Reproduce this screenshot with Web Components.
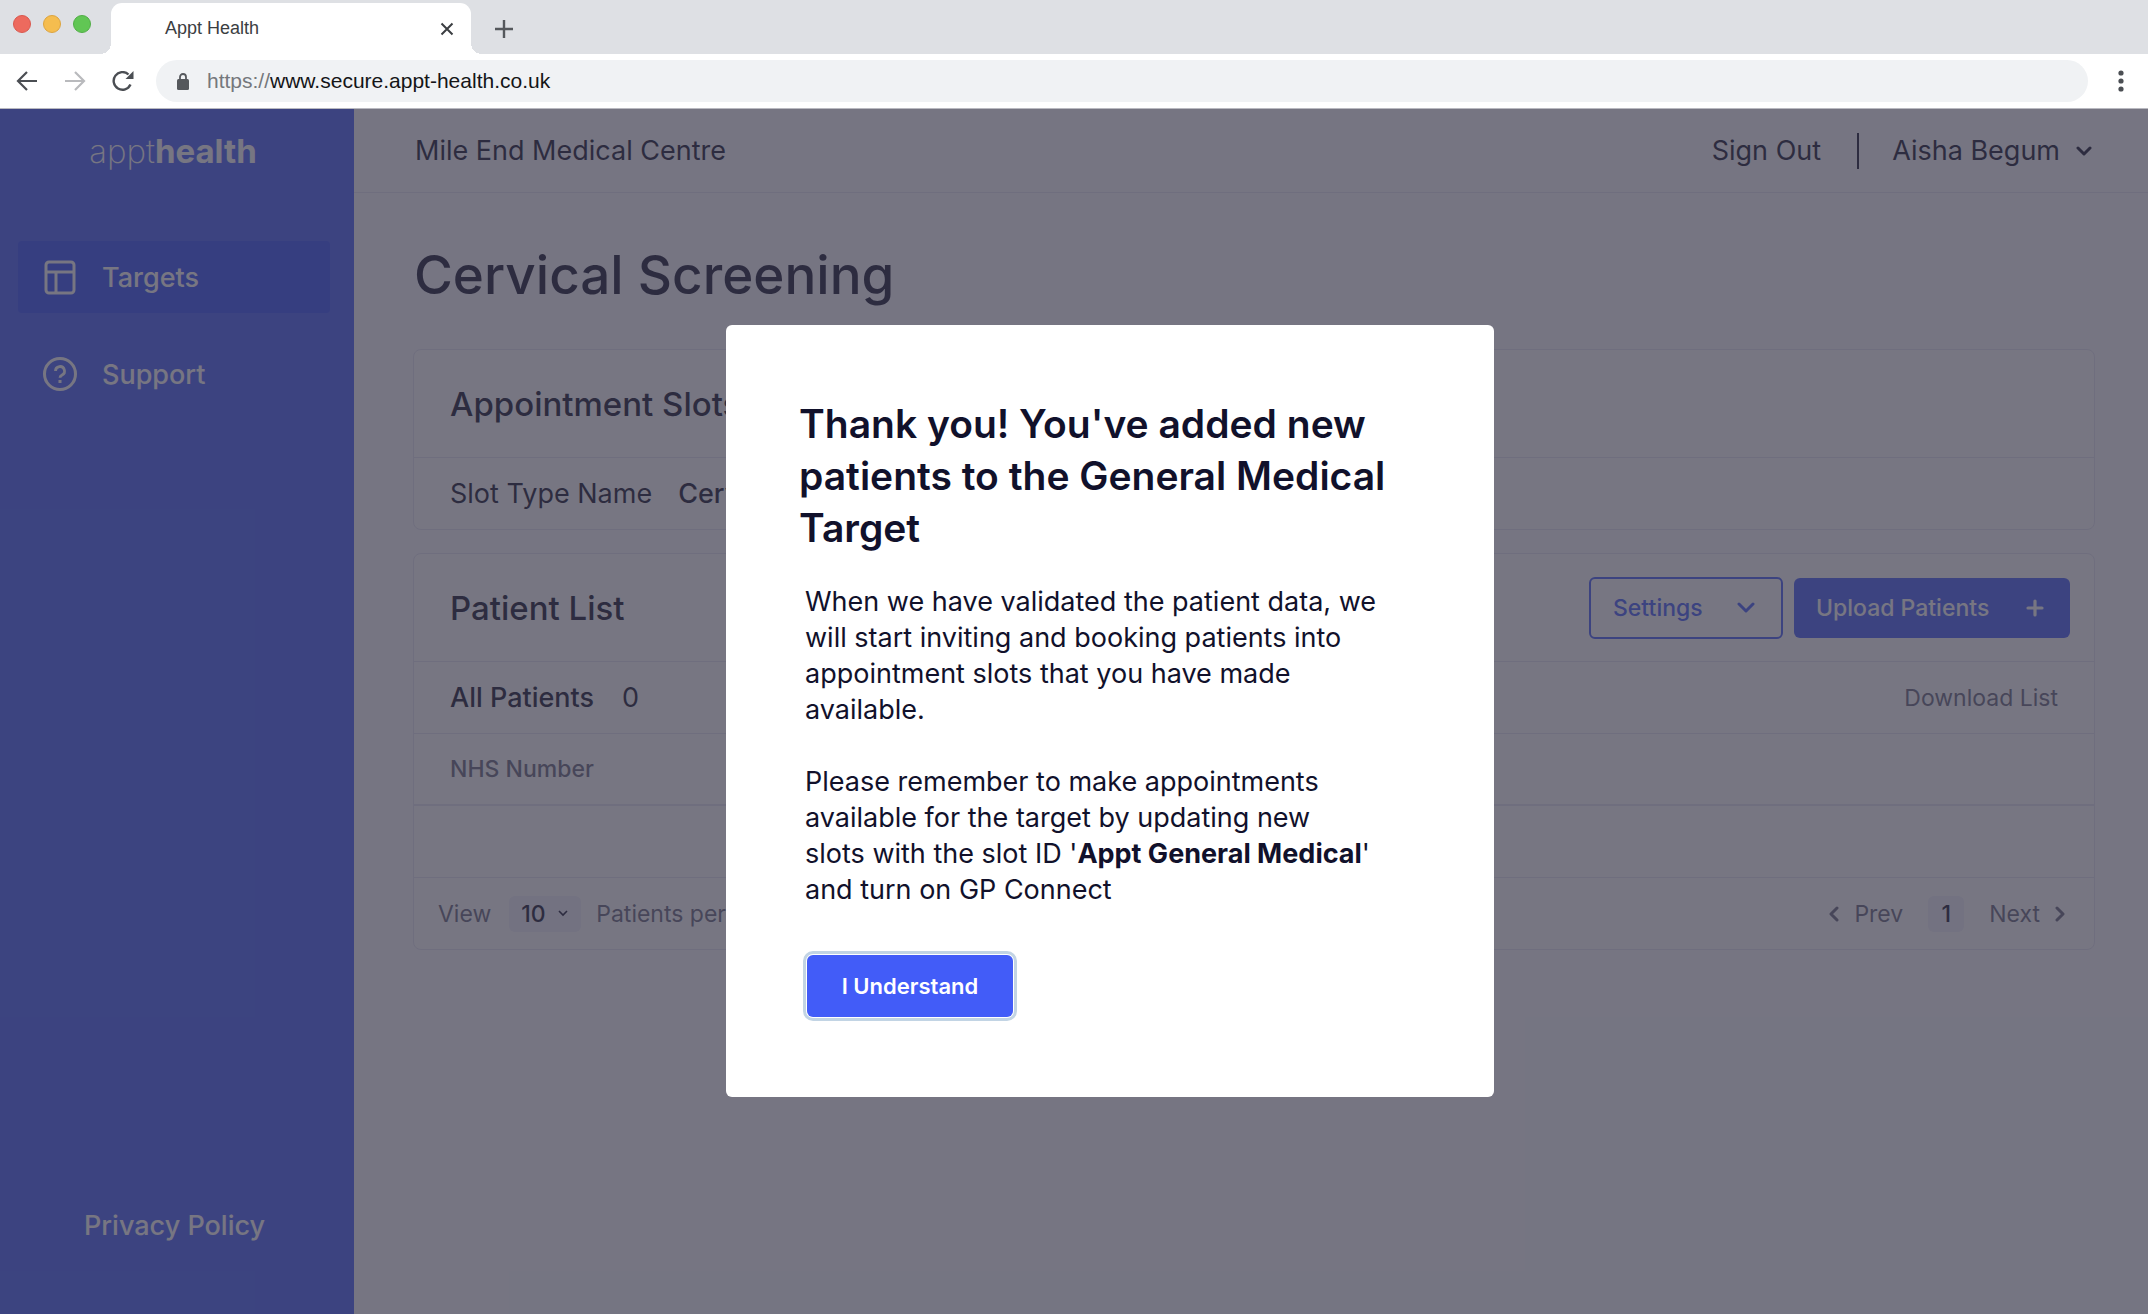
<!DOCTYPE html>
<html lang="en">
<head>
<meta charset="utf-8">
<title>Appt Health</title>
<style>
html, body { margin: 0; height: 100%; }
body {
  font-family: Inter, "Open Sans", sans-serif;
  --ink: #11112b;
  --muted: #66667c;
  --line: #e6e6f2;
  --brand: #425cf8;
  --t-s: 23px;
  --t-m: 27px;
  --t-l: 33px;
  color: var(--ink);
}
</style>
</head>
<body>
<browser-window>
  <app-shell>
    <side-nav slot="nav"></side-nav>
    <top-bar practice="Mile End Medical Centre" user="Aisha Begum"></top-bar>
    <page-content heading="Cervical Screening">
      <info-card heading="Appointment Slots">
        <slot-type-row label="Slot Type Name">Cervical</slot-type-row>
      </info-card>
      <info-card heading="Patient List">
        <list-actions slot="actions"></list-actions>
        <patient-table></patient-table>
      </info-card>
    </page-content>
    <confirm-modal slot="overlay">
      <span slot="title">Thank you! You've added new<br>patients to the General Medical<br>Target</span>
      <span slot="body">When we have validated the patient data, we<br>will start inviting and booking patients into<br>appointment slots that you have made<br>available.</span>
      <span slot="note">Please remember to make appointments<br>available for the target by updating new<br>slots with the slot ID '<b>Appt General Medical</b>'<br>and turn on GP Connect</span>
      <span slot="action">I Understand</span>
    </confirm-modal>
  </app-shell>
</browser-window>

<script>
const define = (name, render) => customElements.define(name, class extends HTMLElement {
  constructor() {
    super();
    this.attachShadow({ mode: 'open' });
  }
  connectedCallback() {
    this.shadowRoot.innerHTML = '<style>*{box-sizing:border-box}svg{display:block;flex:none;fill:none;stroke:currentColor}button,select{font:inherit;color:inherit;background:none;border:0;margin:0;padding:0}a{color:inherit;text-decoration:none}</style>' + render(this);
  }
});

define('browser-window', () => `
<style>
:host { display: flex; flex-direction: column; min-height: 100vh; font-family: "Liberation Sans", Arial, sans-serif; }
.tabs { display: flex; height: 54px; background: #dee0e4; padding-top: 3px; }
.lights { display: flex; gap: 12px; padding: 12px 20px 0 13px; }
.lights i { width: 18px; height: 18px; border-radius: 50%; border: 1px solid; }
.tab { position: relative; display: flex; align-items: center; justify-content: space-between; width: 360px; padding: 0 17px 0 54px; background: #fff; border-radius: 11px 11px 0 0; font-size: 18px; color: #3b3e42; }
.tab::before, .tab::after { content: ""; position: absolute; bottom: 0; width: 11px; height: 11px; }
.tab::before { right: 100%; background: radial-gradient(circle at 0 0, transparent 11px, #fff 11px); }
.tab::after { left: 100%; background: radial-gradient(circle at 100% 0, transparent 11px, #fff 11px); }
.plus { margin: 0 0 0 24px; color: #55585c; }
.bar { display: flex; align-items: center; height: 55px; padding: 0 20px 0 16px; background: #fff; border-bottom: 1px solid #b9b9c0; color: #4b4e53; }
.nav { display: flex; gap: 26px; width: 140px; }
.url { display: flex; align-items: center; gap: 18px; flex: 1; height: 42px; padding-left: 21px; background: #f0f2f4; border-radius: 21px; font-size: 21px; color: #75787c; margin-right: 28px; }
.url b { font-weight: normal; color: #141517; }
.page { display: flex; flex: 1; font-family: Inter, "Open Sans", sans-serif; }
::slotted(*) { flex: 1; }
</style>
<div class="tabs">
  <div class="lights"><i style="background:#ed6a5e;border-color:#d9584e"></i><i style="background:#f5bd4f;border-color:#dca43f"></i><i style="background:#61c654;border-color:#51ae46"></i></div>
  <div class="tab"><span>Appt Health</span>
    <button aria-label="Close tab"><svg width="14" height="14" stroke-width="2"><path d="M1.500 1.500l11 11M12.500 1.500l-11 11"/></svg></button></div>
  <button class="plus" aria-label="New tab"><svg width="18" height="18" stroke-width="2.400"><path d="M9 0v18M0 9h18"/></svg></button>
</div>
<div class="bar">
  <div class="nav">
    <button aria-label="Back"><svg width="22" height="20" stroke-width="2.200"><path d="M21 10H3M11 1L2 10l9 9"/></svg></button>
    <button aria-label="Forward" style="color:#b9babd"><svg width="22" height="20" stroke-width="2.200"><path d="M1 10h18M11 1l9 9-9 9"/></svg></button>
    <button aria-label="Reload"><svg width="22" height="20" stroke-width="2.400"><path d="M18.500 13.500A8.800 8.800 0 1 1 16.500 3.500"/><path d="M21.500 0v8h-8z" fill="currentColor" stroke="none"/></svg></button>
  </div>
  <div class="url"><svg width="12" height="17"><rect y="6" width="12" height="11" rx="1.500" fill="#55585c" stroke="none"/><path d="M3 7V4a3 3 0 0 1 6 0v3" stroke="#55585c" stroke-width="1.800"/></svg><span>https://<b>www.secure.appt-health.co.uk</b></span></div>
  <button aria-label="Menu"><svg width="12" height="24"><g fill="currentColor" stroke="none"><circle cx="5" cy="4" r="2.600"/><circle cx="5" cy="12" r="2.600"/><circle cx="5" cy="20" r="2.600"/></g></svg></button>
</div>
<div class="page"><slot></slot></div>`);

define('app-shell', () => `
<style>
:host { position: relative; display: flex; background: #fafafe; }
main { flex: 1; min-width: 0; }
</style>
<slot name="nav"></slot><main><slot></slot></main><slot name="overlay"></slot>`);

define('side-nav', () => `
<style>
:host { display: flex; flex-direction: column; width: 354px; flex: none; background: var(--brand); color: #fff; }
.logo { height: 84px; padding: 2px 8px 0 0; text-align: center; font-size: 33px; font-weight: 200; line-height: 80px; }
.logo b { font-weight: 700; }
nav { display: flex; flex-direction: column; gap: 25px; padding: 48px 24px 0 18px; flex: 1; }
.policy { padding: 0 84px; font-size: var(--t-m); font-weight: 500; line-height: 36px; margin-bottom: 70px; white-space: nowrap; }
</style>
<div class="logo">appt<b>health</b></div>
<nav>
  <nav-item current label="Targets"><svg width="36" height="36" fill="none" stroke="currentColor" stroke-width="3"><rect x="4" y="3" width="28" height="31" rx="3"/><path d="M4 13h28M14 13v21"/></svg></nav-item>
  <nav-item label="Support"><svg width="36" height="36" fill="none" stroke="currentColor" stroke-width="3"><circle cx="18" cy="18" r="15.500"/><path stroke-width="2.800" d="M13.500 15a4.500 4.500 0 1 1 6.600 4c-1.500.8-2.100 1.300-2.100 2.800"/><path d="M18 24v3"/></svg></nav-item>
</nav>
<a class="policy" href="#privacy">Privacy Policy</a>`);

define('nav-item', el => `
<style>
:host { display: block; }
a { display: flex; align-items: center; gap: 24px; height: 72px; padding-left: 24px; border-radius: 4px; font-size: var(--t-m); font-weight: 500; }
:host([current]) a { background: #2d4af8; }
</style>
<a href="#${el.getAttribute('label').toLowerCase()}"><slot></slot>${el.getAttribute('label')}</a>`);

define('top-bar', el => `
<style>
:host { box-sizing: border-box; display: flex; align-items: center; height: 84px; padding: 0 56px 0 61px; border-bottom: 1px solid var(--line); font-size: var(--t-m); }
.who { display: flex; align-items: center; margin-left: auto; }
.rule { width: 2px; height: 36px; margin: 0 33px 0 36px; background: var(--ink); }
button { display: flex; align-items: center; gap: 16px; }
</style>
<span>${el.getAttribute('practice')}</span>
<div class="who"><a href="#sign-out">Sign Out</a><span class="rule"></span>
<button>${el.getAttribute('user')}<svg width="16" height="10" stroke-width="3" stroke-linecap="round" stroke-linejoin="round"><path d="M2 2l6 6 6-6"/></svg></button></div>`);

define('page-content', el => `
<style>
:host { display: flex; flex-direction: column; gap: 23px; padding: 46px 53px 0 59px; }
h1 { margin: 0 0 15px 1px; font-size: 53px; font-weight: 500; line-height: 72px; }
</style>
<h1>${el.getAttribute('heading')}</h1><slot></slot>`);

define('info-card', el => `
<style>
:host { display: block; background: #fff; border: 1px solid var(--line); border-radius: 8px; }
header { display: flex; align-items: center; justify-content: space-between; height: 108px; padding: 0 24px 0 36px; border-bottom: 1px solid var(--line); }
h2 { margin: 0; font-size: var(--t-l); font-weight: 500; }
</style>
<header><h2>${el.getAttribute('heading')}</h2><slot name="actions"></slot></header><slot></slot>`);

define('slot-type-row', el => `
<style>
:host { display: flex; align-items: center; gap: 26px; height: 71px; padding: 0 36px; font-size: var(--t-m); }
b { font-weight: 500; }
</style>
<span>${el.getAttribute('label')}</span><b><slot></slot></b>`);

define('list-actions', () => `
<style>
:host { display: flex; align-items: center; gap: 11px; font-size: var(--t-s); font-weight: 500; }
button { display: flex; align-items: center; justify-content: space-between; border-radius: 6px; }
.line { width: 194px; height: 62px; padding: 0 26px 0 22px; border: 2px solid var(--brand); color: var(--brand); }
.fill { width: 276px; height: 60px; padding: 0 26px 0 22px; background: var(--brand); color: #fff; }
</style>
<button class="line">Settings<svg width="18" height="12" stroke-width="3" stroke-linecap="round" stroke-linejoin="round"><path d="M2 2l7 7 7-7"/></svg></button>
<button class="fill">Upload Patients<svg width="18" height="18" stroke-width="3.200" stroke-linecap="round"><path d="M9 2v14M2 9h14"/></svg></button>`);

define('patient-table', () => `
<style>
:host { display: block; font-size: var(--t-s); color: var(--muted); }
.row { display: flex; align-items: center; height: 72px; padding: 0 36px; }
.all { border-bottom: 1px solid var(--line); color: var(--ink); font-size: var(--t-m); gap: 28px; }
.all b { font-weight: 500; }
.all a { margin-left: auto; font-size: var(--t-s); color: var(--muted); }
table { width: 100%; border-spacing: 0; }
th, td { height: 72px; padding: 0 36px; text-align: left; font-weight: 500; border-bottom: 1px solid var(--line); }
th { border-bottom-width: 2px; }
.foot { padding: 0 29px 0 24px; height: 71px; }
.size { position: relative; display: flex; align-items: center; margin: 0 15px 0 18px; color: var(--ink); font-weight: 500; }
select { appearance: none; width: 72px; height: 36px; padding-left: 12px; background: #f0f0fa; border-radius: 6px; }
.size svg { position: absolute; right: 13px; pointer-events: none; }
.pages { display: flex; align-items: center; margin-left: auto; }
.pages button { display: flex; align-items: center; gap: 15px; }
.num { width: 36px; height: 36px; margin: 0 25px; line-height: 36px; text-align: center; background: #f0f0fa; border-radius: 6px; color: var(--ink); font-weight: 500; }
</style>
<div class="row all"><b>All Patients</b><span>0</span><a href="#download">Download List</a></div>
<table><thead><tr><th>NHS Number</th></tr></thead><tbody><tr><td></td></tr></tbody></table>
<div class="row foot"><label for="size">View</label>
<span class="size"><select id="size"><option>10</option></select><svg width="10" height="7" stroke-width="1.600"><path d="M1 1l4 4 4-4"/></svg></span>
<span>Patients per page</span>
<div class="pages">
<button><svg width="10" height="16" stroke-width="3" stroke-linecap="round" stroke-linejoin="round"><path d="M8 2L2 8l6 6"/></svg>Prev</button>
<span class="num">1</span>
<button>Next<svg width="10" height="16" stroke-width="3" stroke-linecap="round" stroke-linejoin="round"><path d="M2 2l6 6-6 6"/></svg></button>
</div></div>`);

define('confirm-modal', () => `
<style>
:host { position: absolute; inset: 0; display: flex; align-items: center; justify-content: center; padding: 0 0 2px 72px; background: rgba(58, 57, 74, .69); }
dialog { position: static; display: block; width: 768px; margin: 0; padding: 73px 73px 80px; border: 0; border-radius: 6px; background: #fff; color: var(--ink); }
h2 { margin: 0 0 30px; font-size: 39px; font-weight: 600; line-height: 52px; white-space: nowrap; }
p { margin: 0 0 36px 6px; font-size: var(--t-m); line-height: 36px; white-space: nowrap; }
button { display: block; height: 62px; min-width: 206px; margin: 47px 0 0 8px; padding: 0 32px; border-radius: 6px; background: var(--brand); color: #fff; font-size: 22px; font-weight: 600; outline: 3px solid #c2d4e4; outline-offset: 1px; }
</style>
<dialog open aria-labelledby="t"><h2 id="t"><slot name="title"></slot></h2>
<p><slot name="body"></slot></p><p><slot name="note"></slot></p>
<button><slot name="action"></slot></button></dialog>`);
</script>
</body>
</html>
